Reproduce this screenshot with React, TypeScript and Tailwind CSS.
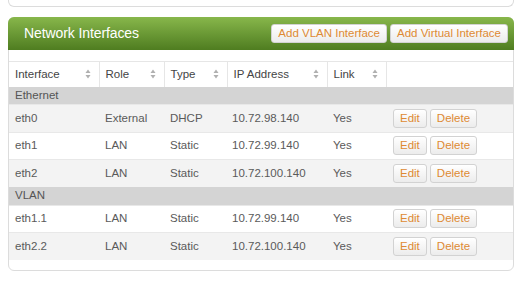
import React from "react";

type Row = { name: string; role: string; type: string; ip: string; link: string };

const groups: { label: string; rows: Row[] }[] = [
  {
    label: "Ethernet",
    rows: [
      { name: "eth0", role: "External", type: "DHCP", ip: "10.72.98.140", link: "Yes" },
      { name: "eth1", role: "LAN", type: "Static", ip: "10.72.99.140", link: "Yes" },
      { name: "eth2", role: "LAN", type: "Static", ip: "10.72.100.140", link: "Yes" },
    ],
  },
  {
    label: "VLAN",
    rows: [
      { name: "eth1.1", role: "LAN", type: "Static", ip: "10.72.99.140", link: "Yes" },
      { name: "eth2.2", role: "LAN", type: "Static", ip: "10.72.100.140", link: "Yes" },
    ],
  },
];

function SortIcon() {
  return (
    <svg width="6" height="10" viewBox="0 0 6 10" className="shrink-0">
      <path d="M3 0.5 L5.5 4 L0.5 4 Z" fill="#b0b0b0" />
      <path d="M3 9.5 L5.5 6 L0.5 6 Z" fill="#b0b0b0" />
    </svg>
  );
}

function Btn({ children }: { children: React.ReactNode }) {
  return (
    <button className="h-[19px] px-[6px] rounded-[3px] border border-[#d2d2d2] bg-gradient-to-b from-white to-[#ececec] text-[#de8a33] leading-none shadow-[inset_0_1px_0_#fff]">
      {children}
    </button>
  );
}

function Th({ label, w, last }: { label?: string; w: string; last?: boolean }) {
  return (
    <th
      className={`${w} h-[25px] p-0 font-normal text-left text-[#444] ${
        last ? "" : "border-r border-[#e6e6e6]"
      }`}
    >
      {label && (
        <div className="flex items-center justify-between pl-[6px] pr-[8px]">
          <span>{label}</span>
          <SortIcon />
        </div>
      )}
    </th>
  );
}

export default function App() {
  return (
    <div
      className="w-[524px] h-[281px] bg-white text-[11.5px] text-[#5a5a5a]"
      style={{ fontFamily: '"Liberation Sans", Arial, sans-serif' }}
    >
      <div className="mx-[8px] w-[506px] h-[7px] border border-t-0 border-[#dcdcdc] rounded-b-[6px]" />
      <div className="mx-[8px] mt-[10px] w-[506px] border border-[#dcdcdc] rounded-[6px] bg-white">
        <div className="h-[33px] -mx-px -mt-px rounded-t-[6px] bg-gradient-to-b from-[#88b74b] to-[#4f7d20] flex items-center justify-between pl-[16px] pr-[6px]">
          <span className="text-white text-[14px] tracking-[-0.1px]">Network Interfaces</span>
          <div className="flex gap-[3px]">
            <Btn>Add VLAN Interface</Btn>
            <Btn>Add Virtual Interface</Btn>
          </div>
        </div>
        <div className="pt-[11px] pb-[10px]">
          <table className="w-full border-collapse table-fixed">
            <thead>
              <tr className="border-t border-[#e6e6e6]">
                <Th label="Interface" w="w-[90px]" />
                <Th label="Role" w="w-[65px]" />
                <Th label="Type" w="w-[63px]" />
                <Th label="IP Address" w="w-[100px]" />
                <Th label="Link" w="w-[59px]" />
                <Th w="w-auto" last />
              </tr>
            </thead>
            <tbody>
              {groups.map((g) => (
                <React.Fragment key={g.label}>
                  <tr className="bg-[#d4d4d4]">
                    <td colSpan={6} className="h-[18px] p-0 pl-[6px] text-[#555]">
                      {g.label}
                    </td>
                  </tr>
                  {g.rows.map((r, i) => (
                    <tr
                      key={r.name}
                      className={`h-[27.5px] border-t border-[#e8e8e8] ${
                        i % 2 === 0 ? (g.label === "VLAN" ? "bg-white" : "bg-[#f3f3f3]") : g.label === "VLAN" ? "bg-[#f3f3f3]" : "bg-white"
                      }`}
                    >
                      <td className="p-0 pl-[6px]">{r.name}</td>
                      <td className="p-0 pl-[6px]">{r.role}</td>
                      <td className="p-0 pl-[6px]">{r.type}</td>
                      <td className="p-0 pl-[5px]">{r.ip}</td>
                      <td className="p-0 pl-[6px]">{r.link}</td>
                      <td className="p-0 pl-[7px]">
                        <div className="flex gap-[3px]">
                          <Btn>Edit</Btn>
                          <Btn>Delete</Btn>
                        </div>
                      </td>
                    </tr>
                  ))}
                </React.Fragment>
              ))}
            </tbody>
          </table>
        </div>
      </div>
    </div>
  );
}
